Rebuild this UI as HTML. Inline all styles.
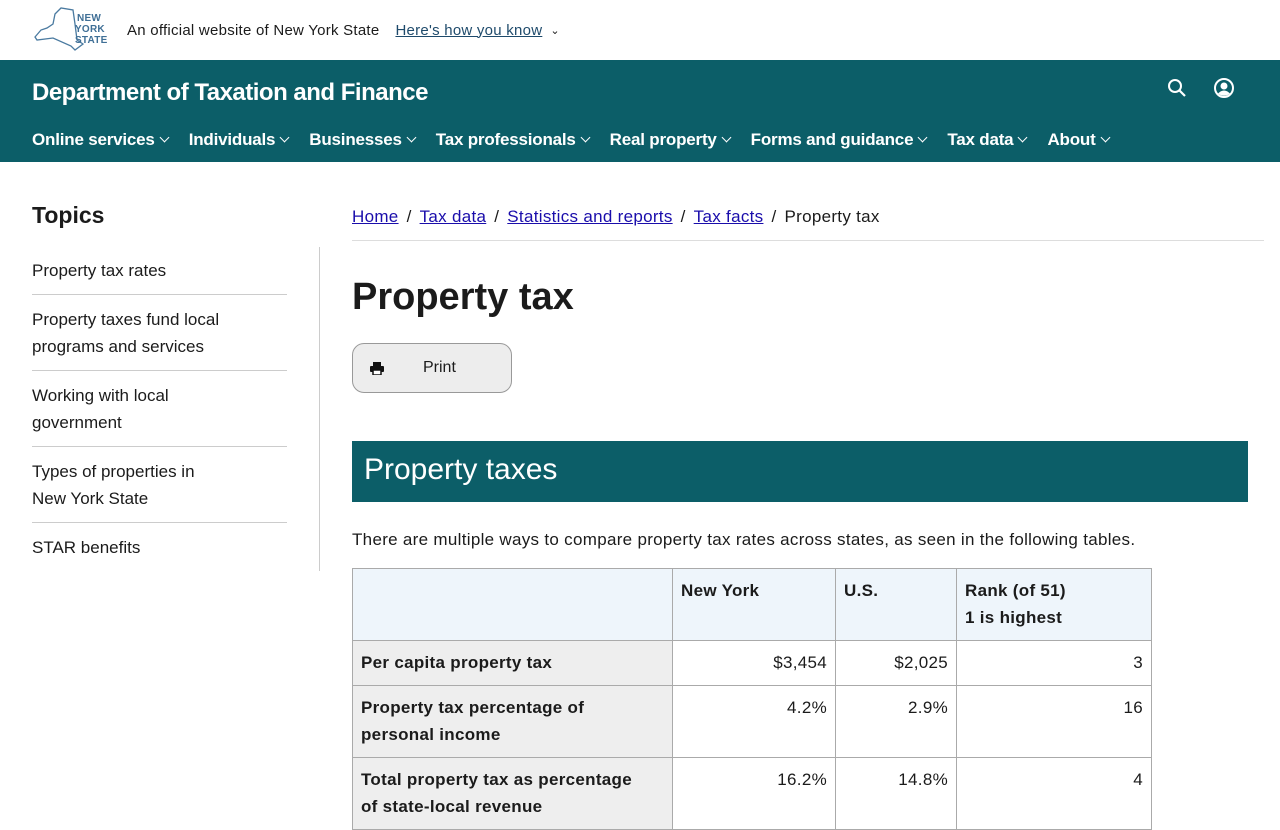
<!DOCTYPE html>
<html><head><meta charset="utf-8"><style>
*{box-sizing:border-box;margin:0;padding:0}
body{width:1280px;height:800px;overflow:hidden;font-family:"Liberation Sans",sans-serif;color:#1b1b1b;background:#fff}
.top{height:60px;display:flex;align-items:center;padding-left:33px;font-size:15px;letter-spacing:.25px}
.top .txt{margin-left:16px}
.top a{margin-left:16px;color:#1e4a6b;text-decoration:underline}
.hdr{background:#0c5e68;height:102px;color:#fff;position:relative}
.hdr h1{position:absolute;left:32px;top:19px;font-size:24px;font-weight:bold;letter-spacing:-.5px}
.nav{position:absolute;left:32px;top:70px;display:flex;font-size:17px;font-weight:bold;letter-spacing:-.2px}
.nav span{margin-right:21px}
.nav span:after{content:"";display:inline-block;width:6px;height:6px;border-right:1.5px solid #fff;border-bottom:1.5px solid #fff;transform:rotate(45deg);margin-left:6px;position:relative;top:-4px}
.side{position:absolute;left:32px;top:202px;width:255px}
.side h2{font-size:23px;margin-bottom:17px}
.side div{font-size:17px;line-height:27px;padding:11px 0 10px;border-bottom:1px solid #ccc}
.vl{position:absolute;left:319px;top:247px;height:324px;border-left:1px solid #ccc}
.main{position:absolute;left:352px;top:207px;width:912px}
.bc{font-size:17px;padding-bottom:13px;border-bottom:1px solid #ddd;letter-spacing:.3px}
.bc a{color:#1a0dab;text-decoration:underline}
.bc i{font-style:normal;margin:0 8px}
.main h1{font-size:38px;margin-top:35px}
.btn{margin-top:24px;width:160px;height:50px;border:1px solid #999;border-radius:12px;background:#ededed;display:flex;align-items:center;font-size:16px}
.band{margin-top:48px;width:896px;height:61px;background:#0c5e68;color:#fff;font-size:30px;padding:12px 12px}
p{font-size:17px;margin-top:28px;letter-spacing:.3px}
table{border-collapse:collapse;margin-top:18px;font-size:17px;letter-spacing:.3px}
td{border:1px solid #aaa;padding:8px 8px 9px;line-height:27px;vertical-align:top}
th{border:1px solid #aaa;background:#eef5fb;text-align:left;padding:8px 8px 9px;line-height:27px;vertical-align:top}
td.l{background:#eee;font-weight:bold}
td.n{text-align:right}
</style></head><body>
<div class="top">
<svg width="78" height="48" viewBox="0 0 78 48"><path d="M2 31 L8 24 L14 22 L20 18 L22 8 L28 2 L40 4 L42 18 L44 34 L50 38 L42 44 L38 40 L20 32 L4 34 Z" fill="none" stroke="#4a7aa0" stroke-width="1.3"/><text x="44" y="15" font-size="10" font-weight="bold" fill="#3f6f96" font-family="Liberation Sans">NEW</text><text x="42" y="26" font-size="10" font-weight="bold" fill="#3f6f96" font-family="Liberation Sans">YORK</text><text x="42" y="37" font-size="10" font-weight="bold" fill="#3f6f96" font-family="Liberation Sans">STATE</text></svg>
<span class="txt">An official website of New York State</span><a>Here's how you know</a><span style="margin-left:8px;font-size:11px">&#8964;</span></div>
<div class="hdr"><h1>Department of Taxation and Finance</h1>
<svg style="position:absolute;left:1167px;top:18px" width="20" height="20"><circle cx="8" cy="8" r="6" fill="none" stroke="#fff" stroke-width="2"/><path d="M12.5 12.5 L18 18" stroke="#fff" stroke-width="2.2"/></svg>
<svg style="position:absolute;left:1213px;top:17px" width="22" height="22"><circle cx="11" cy="11" r="9" fill="none" stroke="#fff" stroke-width="2"/><circle cx="11" cy="9" r="3.5" fill="#fff"/><path d="M5 16.5 Q11 10.5 17 16.5 Q11 21 5 16.5Z" fill="#fff"/></svg>
<div class="nav"><span>Online services</span><span>Individuals</span><span>Businesses</span><span>Tax professionals</span><span>Real property</span><span>Forms and guidance</span><span>Tax data</span><span>About</span></div></div>
<div class="side"><h2>Topics</h2>
<div>Property tax rates</div><div>Property taxes fund local<br>programs and services</div><div>Working with local<br>government</div><div>Types of properties in<br>New York State</div><div style="border:none">STAR benefits</div></div>
<div class="vl"></div>
<div class="main">
<div class="bc"><a>Home</a><i>/</i><a>Tax data</a><i>/</i><a>Statistics and reports</a><i>/</i><a>Tax facts</a><i>/</i>Property tax</div>
<h1>Property tax</h1>
<div class="btn"><svg style="margin-left:17px" width="14" height="13"><rect x="3" y="0" width="8" height="4" fill="#111"/><rect x="0" y="4" width="14" height="6" rx="1" fill="#111"/><rect x="3" y="8" width="8" height="5" fill="#fff" stroke="#111" stroke-width="1.5"/></svg><span style="margin-left:39px">Print</span></div>
<div class="band">Property taxes</div>
<p>There are multiple ways to compare property tax rates across states, as seen in the following tables.</p>
<table>
<tr><th style="width:320px"></th><th style="width:163px">New York</th><th style="width:121px">U.S.</th><th style="width:195px">Rank (of 51)<br>1 is highest</th></tr>
<tr><td class="l">Per capita property tax</td><td class="n">$3,454</td><td class="n">$2,025</td><td class="n">3</td></tr>
<tr><td class="l">Property tax percentage of<br>personal income</td><td class="n">4.2%</td><td class="n">2.9%</td><td class="n">16</td></tr>
<tr><td class="l">Total property tax as percentage<br>of state-local revenue</td><td class="n">16.2%</td><td class="n">14.8%</td><td class="n">4</td></tr>
</table></div>
</body></html>
